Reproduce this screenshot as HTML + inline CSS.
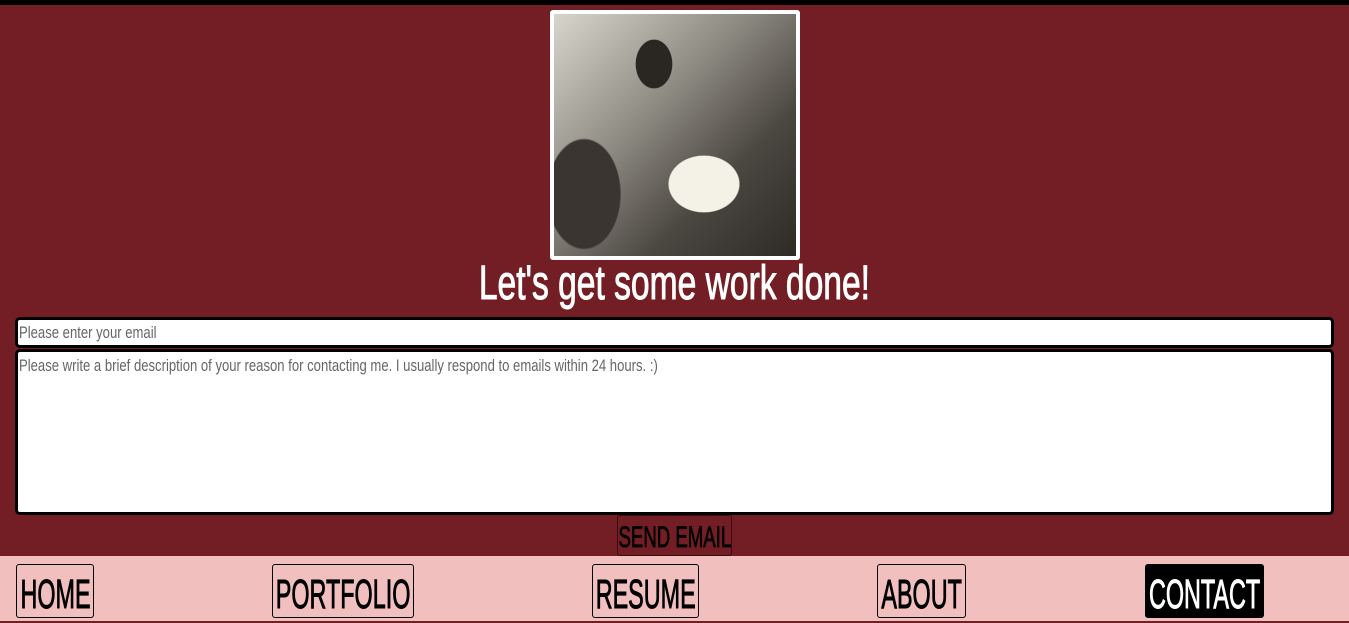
<!DOCTYPE html>
<html><head><style>
*{margin:0;padding:0;box-sizing:border-box}
body{width:1349px;height:621px;overflow:hidden;background:#721e24;font-family:"Liberation Sans",sans-serif;position:relative}
.top{position:absolute;left:0;top:0;width:1349px;height:5px;background:#000}
.photo{position:absolute;left:550px;top:10px;width:250px;height:250px;background:#fff;border-radius:3px;padding:4px}
.photo div{width:100%;height:100%;background:
radial-gradient(ellipse 30px 40px at 100px 50px,#2a2622 60%,transparent 62%),
radial-gradient(ellipse 50px 40px at 150px 170px,#f4f2e6 70%,transparent 72%),
radial-gradient(ellipse 60px 90px at 30px 180px,#3a3530 60%,transparent 62%),
linear-gradient(135deg,#d8d6cc 0%,#8d8a82 40%,#4a4640 70%,#2e2a26 100%)}
.in span{display:inline-block}
h1{position:absolute;left:0;width:1349px;top:256px;text-align:center;color:#fff;font-size:48px;font-weight:normal;white-space:nowrap;-webkit-text-stroke:1px #fff}
h1 span{display:inline-block;transform:scaleX(.7)}
.in{position:absolute;left:15px;width:1319px;background:#fff;border:3px solid #000;border-radius:5px;color:#666;font-size:17px;padding:3px 1px;white-space:nowrap}
.in span{transform:scaleX(.77);transform-origin:left}
.btn{position:absolute;left:617px;top:515px;width:115px;height:41px;border:1px solid #3a0a0e;border-radius:3px;font-size:30px;text-align:center;line-height:44px;color:#000;white-space:nowrap;-webkit-text-stroke:.8px #000}
.btn span{display:inline-block;transform:scaleX(.62);margin:0 -40px}
.nav{position:absolute;left:0;top:556px;width:1349px;height:65px;background:#f2bfbf}
.n{position:absolute;top:8px;height:54px;border:1px solid #000;border-radius:3px;font-size:41px;line-height:58px;text-align:center;color:#000;white-space:nowrap;-webkit-text-stroke:1px currentColor}
.n span{display:inline-block;transform:scaleX(.57);margin:0 -80px}
</style></head><body>
<div class="top"></div>
<div class="photo"><div></div></div>
<h1><span>Let's get some work done!</span></h1>
<div class="in" style="top:317px;height:31px"><span>Please enter your email</span></div>
<div class="in" style="top:349px;height:166px;padding-top:4px"><span>Please write a brief description of your reason for contacting me. I usually respond to emails within 24 hours. :)</span></div>
<div class="btn"><span>SEND EMAIL</span></div>
<div class="nav">
<div class="n" style="left:16px;width:78px"><span>HOME</span></div>
<div class="n" style="left:272px;width:142px"><span>PORTFOLIO</span></div>
<div class="n" style="left:592px;width:107px"><span>RESUME</span></div>
<div class="n" style="left:877px;width:89px"><span>ABOUT</span></div>
<div class="n" style="left:1145px;width:119px;background:#000;color:#fff"><span>CONTACT</span></div>
</div>
</body></html>
